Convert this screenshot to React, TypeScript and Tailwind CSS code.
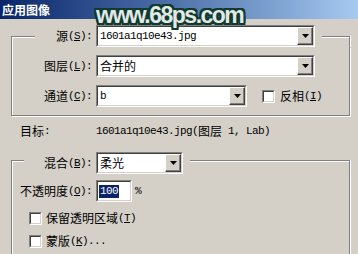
import type { ReactNode } from "react";

const CJK = /([\u2E80-\u9FFF\uFF00-\uFFEF]+)/;

// mixed text: CJK runs at 12px, latin runs at SimSun-like 6px advance
function T({ s }: { s: string }) {
  return (
    <>
      {s
        .split(CJK)
        .filter(Boolean)
        .map((part, i) =>
          CJK.test(part) ? (
            <span key={i} className="font-['Noto_Sans_CJK_SC',sans-serif] text-[12px] leading-[14px]">
              {part}
            </span>
          ) : (
            <span
              key={i}
              className="whitespace-pre font-['Liberation_Mono',monospace] text-[11px] leading-[14px] tracking-[-0.6px]"
            >
              {part}
            </span>
          ),
        )}
    </>
  );
}

function Acc({ cn, k, tail = ":" }: { cn: string; k: string; tail?: string }) {
  return (
    <span className="flex items-center whitespace-nowrap text-black">
      <T s={cn} />
      <span className="whitespace-pre font-['Liberation_Mono',monospace] text-[11px] leading-[14px] tracking-[-0.6px]">
        (<span className="underline underline-offset-[1px]">{k}</span>){tail}
      </span>
    </span>
  );
}

function Arrow() {
  return (
    <div className="flex h-full w-[16px] items-center justify-center border border-t-white border-l-white border-r-[#404040] border-b-[#404040] bg-[#d4d0c8] shadow-[inset_-1px_-1px_0_#808080]">
      <svg width="7" height="4" viewBox="0 0 7 4">
        <path d="M0 0h7L3.5 4z" fill="#000" />
      </svg>
    </div>
  );
}

function Sunken({ className, children }: { className: string; children: ReactNode }) {
  return (
    <div
      className={`h-[22px] border border-t-[#808080] border-l-[#808080] border-r-white border-b-white ${className}`}
    >
      <div className="flex h-full border border-t-[#404040] border-l-[#404040] border-r-[#d4d0c8] border-b-[#d4d0c8] bg-white">
        {children}
      </div>
    </div>
  );
}

function Select({ className, value }: { className: string; value: string }) {
  return (
    <Sunken className={className}>
      <div className="flex flex-1 items-center overflow-hidden whitespace-nowrap pl-[2px] text-black">
        <T s={value} />
      </div>
      <Arrow />
    </Sunken>
  );
}

function Check() {
  return (
    <div className="h-[13px] w-[13px] shrink-0 border border-t-[#808080] border-l-[#808080] border-r-white border-b-white">
      <div className="h-full w-full border border-t-[#404040] border-l-[#404040] border-r-[#d4d0c8] border-b-[#d4d0c8] bg-white" />
    </div>
  );
}

export default function App() {
  return (
    <div className="relative h-[254px] w-[358px] overflow-hidden bg-[#d4d0c8] text-black">
      {/* title bar */}
      <div className="flex h-[19px] items-center bg-linear-to-r from-[#0a246a] to-[#a6caf0] pl-[2px]">
        <span className="font-['Noto_Sans_CJK_SC',sans-serif] text-[12px] font-bold leading-none text-white">
          应用图像
        </span>
      </div>

      <div className="pl-[11px] pr-[8px]">
        {/* source group */}
        <div className="mt-[6px]">
          <div className="flex h-[22px]">
            <div className="h-[11px] w-[24px] self-end border-t border-l border-t-[#808080] border-l-[#808080] shadow-[inset_1px_1px_0_#fff]" />
            <div className="flex w-[57px] items-center justify-end">
              <Acc cn="源" k="S" />
            </div>
            <Select className="ml-[4px] w-[219px]" value="1601a1q10e43.jpg" />
            <div className="w-[7px]" />
            <div className="h-[11px] flex-1 self-end border-t border-r border-t-[#808080] border-r-[#808080] shadow-[inset_0_1px_0_#fff,1px_0_0_#fff]" />
          </div>
          <div className="flex flex-col gap-[8px] border-x border-b border-x-[#808080] border-b-[#808080] pt-[8px] pb-[8px] shadow-[inset_1px_0_0_#fff,1px_1px_0_#fff]">
            <div className="flex h-[22px]">
              <div className="flex w-[80px] items-center justify-end">
                <Acc cn="图层" k="L" />
              </div>
              <Select className="ml-[4px] w-[219px]" value="合并的" />
            </div>
            <div className="flex h-[22px] items-center">
              <div className="flex h-full w-[80px] items-center justify-end">
                <Acc cn="通道" k="C" />
              </div>
              <Select className="ml-[4px] w-[151px]" value="b" />
              <div className="ml-[15px]">
                <Check />
              </div>
              <div className="ml-[5px]">
                <Acc cn="反相" k="I" tail="" />
              </div>
            </div>
          </div>
        </div>

        {/* target */}
        <div className="mt-[4px] flex h-[22px] items-center pl-[9px]">
          <div className="flex w-[76px] items-center">
            <T s="目标:" />
          </div>
          <div className="flex items-center whitespace-nowrap">
            <T s="1601a1q10e43.jpg(图层 1, Lab)" />
          </div>
        </div>

        {/* blending group */}
        <div className="mt-[10px]">
          <div className="flex h-[22px]">
            <div className="h-[14px] w-[13px] self-end border-t border-l border-t-[#808080] border-l-[#808080] shadow-[inset_1px_1px_0_#fff]" />
            <div className="flex w-[68px] items-center justify-end">
              <Acc cn="混合" k="B" />
            </div>
            <Select className="ml-[4px] w-[87px]" value="柔光" />
            <div className="w-[7px]" />
            <div className="h-[14px] flex-1 self-end border-t border-r border-t-[#808080] border-r-[#808080] shadow-[inset_0_1px_0_#fff,1px_0_0_#fff]" />
          </div>
          <div className="h-[120px] border-x border-x-[#808080] pt-[6px] shadow-[inset_1px_0_0_#fff,1px_0_0_#fff]">
            <div className="flex h-[22px] items-center">
              <div className="flex h-full w-[80px] items-center justify-end">
                <Acc cn="不透明度" k="O" />
              </div>
              <Sunken className="ml-[4px] w-[36px]">
                <div className="flex items-center pl-[1px]">
                  <span className="flex h-[13px] items-center bg-[#0a246a] px-[1px] text-white">
                    <T s="100" />
                  </span>
                </div>
              </Sunken>
              <div className="ml-[3px] flex items-center">
                <T s="%" />
              </div>
            </div>
            <div className="mt-[5px] flex h-[22px] items-center pl-[17px]">
              <Check />
              <div className="ml-[4px]">
                <Acc cn="保留透明区域" k="T" tail="" />
              </div>
            </div>
            <div className="mt-[1px] flex h-[22px] items-center pl-[17px]">
              <Check />
              <div className="ml-[4px]">
                <Acc cn="蒙版" k="K" tail="..." />
              </div>
            </div>
          </div>
        </div>
      </div>

      {/* site watermark over the dialog */}
      <div className="absolute left-[96px] top-[2px] whitespace-nowrap font-['Liberation_Sans',Arial,sans-serif] text-[23px] font-bold leading-[26px] tracking-[-1.5px] text-[#e4e9e6] [text-shadow:2px_0_#0e3a30,-2px_0_#0e3a30,0_2px_#0e3a30,0_-2px_#0e3a30,2px_2px_#0e3a30,-2px_-2px_#0e3a30,2px_-2px_#0e3a30,-2px_2px_#0e3a30]">
        www.68ps.com
      </div>
    </div>
  );
}
